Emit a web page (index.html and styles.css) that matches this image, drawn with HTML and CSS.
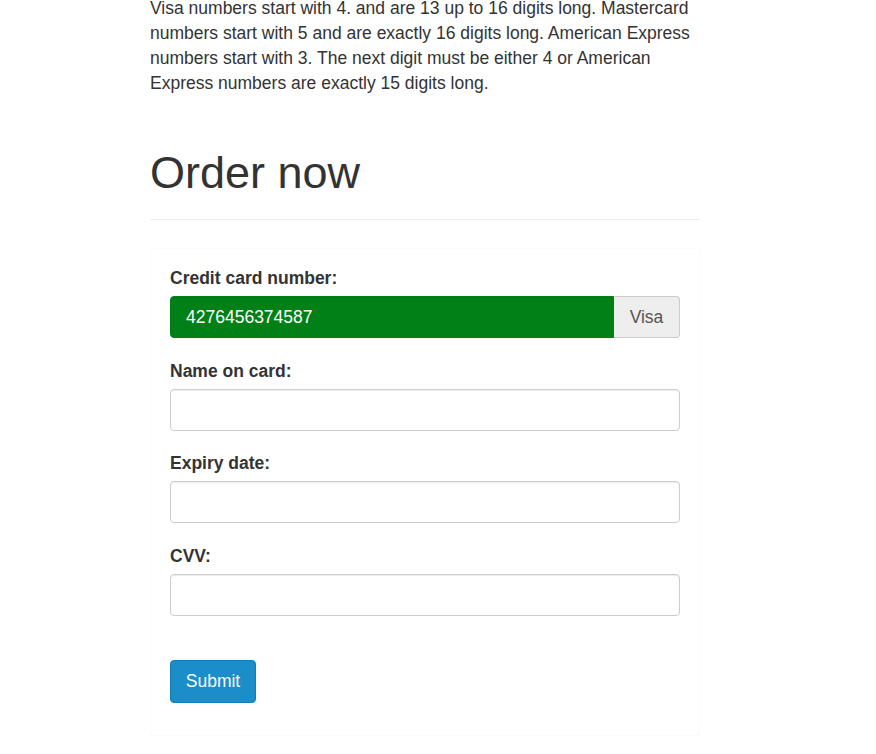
FILE: index.html
```html
<!DOCTYPE html>
<html>
<head>
<meta charset="utf-8">
<link rel="stylesheet" href="styles.css">
</head>
<body>
<div class="container">
  <p class="intro">Visa numbers start with 4. and are 13 up to 16 digits long. Mastercard numbers start with 5 and are exactly 16 digits long. American Express numbers start with 3. The next digit must be either 4 or American Express numbers are exactly 15 digits long.</p>
  <h1 class="title">Order now</h1>
  <hr class="rule">
  <form class="panel">
    <div class="form-group">
      <label class="label">Credit card number:</label>
      <div class="input-group">
        <input class="control control-valid" type="text" value="4276456374587">
        <span class="addon">Visa</span>
      </div>
    </div>
    <div class="form-group">
      <label class="label">Name on card:</label>
      <input class="control" type="text">
    </div>
    <div class="form-group">
      <label class="label">Expiry date:</label>
      <input class="control" type="text">
    </div>
    <div class="form-group">
      <label class="label">CVV:</label>
      <input class="control" type="text">
    </div>
    <div class="actions">
      <button class="btn" type="button">Submit</button>
    </div>
  </form>
</div>
</body>
</html>
```
FILE: styles.css
```css
* { box-sizing: border-box; }
html, body { margin: 0; padding: 0; background: #fff; }
body {
  font-family: "Liberation Sans", Arial, Helvetica, sans-serif;
  font-size: 17.5px;
  line-height: 25px;
  color: #333;
}
.container {
  width: 550px;
  margin-left: 150px;
}
.intro {
  margin: -4.5px 0 0 0;
}
.title {
  font-size: 45px;
  font-weight: 400;
  line-height: 49.5px;
  margin: 52px 0 0 0;
  color: #333;
}
.rule {
  border: 0;
  border-top: 1px solid #eee;
  margin: 22px 0 28px 0;
}
.panel {
  border: 1px solid #fcfcfc;
  border-radius: 4px;
  box-shadow: 0 1px 1px rgba(0,0,0,0.05);
  padding: 17px 19px 32px 19px;
}
.form-group {
  margin-bottom: 20.5px;
}
.label {
  display: block;
  font-size: 17.5px;
  font-weight: 700;
  line-height: 25px;
  margin-bottom: 5px;
}
.input-group {
  display: flex;
}
.control {
  display: block;
  width: 100%;
  height: 42px;
  padding: 8px 15px;
  font-family: inherit;
  font-size: 17.5px;
  color: #555;
  background: #fff;
  border: 1px solid #ccc;
  border-radius: 4px;
  box-shadow: inset 0 1px 1px rgba(0,0,0,0.075);
}
.control-valid {
  flex: 1;
  background: #008017;
  border-color: #008017;
  color: #fff;
  border-radius: 4px 0 0 4px;
}
.addon {
  display: flex;
  align-items: center;
  justify-content: center;
  width: 66px;
  font-size: 17.5px;
  background: #eee;
  color: #555;
  border: 1px solid #ccc;
  border-left: 0;
  border-radius: 0 4px 4px 0;
}
.actions {
  padding-top: 24px;
}
.btn {
  display: block;
  font-family: inherit;
  font-size: 17.5px;
  color: #fff;
  background: #1b8dc9;
  border: 1px solid #0f7db8;
  border-radius: 4px;
  height: 43px;
  width: 86px;
  padding: 0;
}
```
